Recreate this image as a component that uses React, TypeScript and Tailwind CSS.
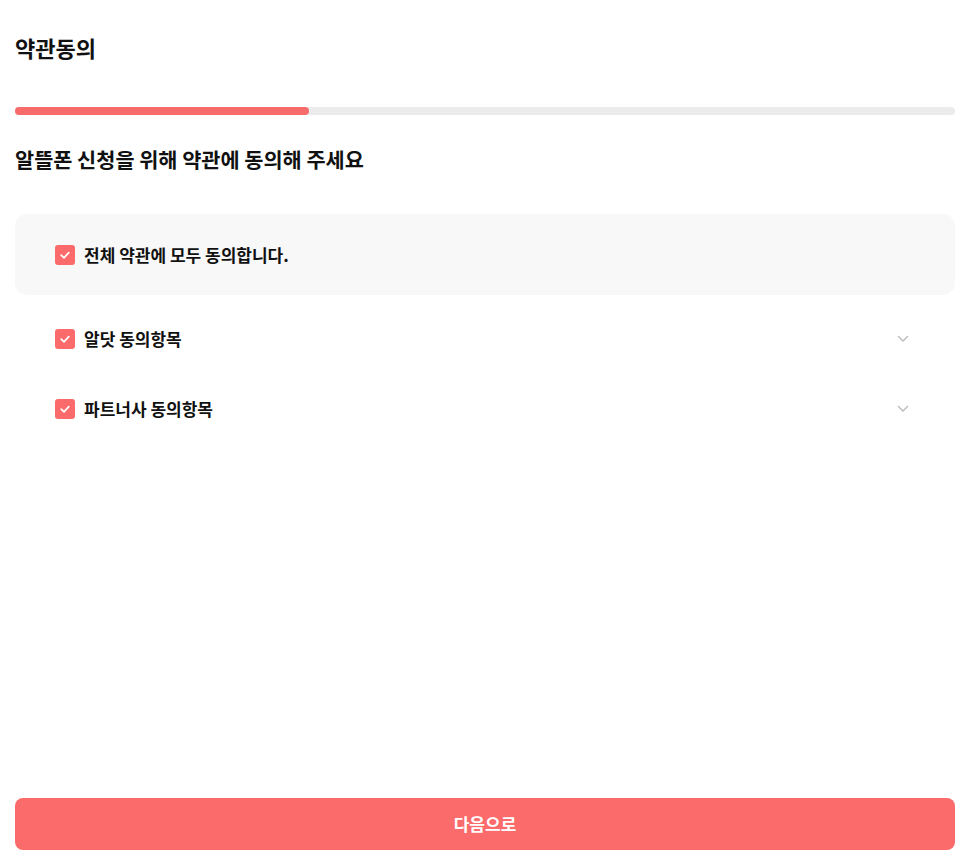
import { useState } from "react";

const FONT = "font-['Noto_Sans_CJK_KR','Noto_Sans',sans-serif]";

function CheckBox({ checked }: { checked: boolean }) {
  return (
    <span
      className={`flex h-5 w-5 shrink-0 items-center justify-center rounded-[3px] ${
        checked ? "bg-[#fb6b6b]" : "border border-[#d0d0d0] bg-white"
      }`}
    >
      {checked && (
        <svg width="14" height="14" viewBox="0 0 14 14" fill="none">
          <path d="M3.2 7.2 L6 9.8 L10.8 4.6" stroke="white" strokeWidth="1.7" strokeLinecap="round" strokeLinejoin="round" />
        </svg>
      )}
    </span>
  );
}

function Chevron() {
  return (
    <svg width="12" height="8" viewBox="0 0 12 8" fill="none">
      <path d="M1.5 1.5 L6 6 L10.5 1.5" stroke="#bdbdbd" strokeWidth="1.5" strokeLinecap="round" strokeLinejoin="round" />
    </svg>
  );
}

function TermRow({ label }: { label: string }) {
  return (
    <div className="flex h-[70px] items-center pl-[40px] pr-[46px]">
      <CheckBox checked />
      <span className="ml-[9px] flex-1 text-[17px] font-bold text-[#111]">{label}</span>
      <Chevron />
    </div>
  );
}

export default function App() {
  const [all] = useState(true);
  return (
    <div className={`flex min-h-screen flex-col bg-white pl-[15px] pr-[13px] ${FONT}`}>
      <h1 className="pt-[33px] text-[22px] leading-[28px] font-bold text-[#111]">약관동의</h1>

      <div className="mt-[46px] h-2 w-full rounded-full bg-[#ebebeb]">
        <div className="h-2 w-[31.3%] rounded-full bg-[#f86b6b]" />
      </div>

      <h2 className="mt-[31px] text-[20.8px] leading-[27px] font-bold text-[#111]">
        알뜰폰 신청을 위해 약관에 동의해 주세요
      </h2>

      <div className="mt-[41px] flex h-[81px] items-center rounded-xl bg-[#f8f8f8] pl-[40px]">
        <CheckBox checked={all} />
        <span className="ml-[9px] text-[17px] font-bold text-[#111]">전체 약관에 모두 동의합니다.</span>
      </div>

      <div className="mt-[9px]">
        <TermRow label="알닷 동의항목" />
        <TermRow label="파트너사 동의항목" />
      </div>

      <div className="flex-1" />

      <button className="mb-[12px] h-[52px] w-full rounded-lg bg-[#fc6b6b] text-[17px] font-bold text-white">
        다음으로
      </button>
    </div>
  );
}
